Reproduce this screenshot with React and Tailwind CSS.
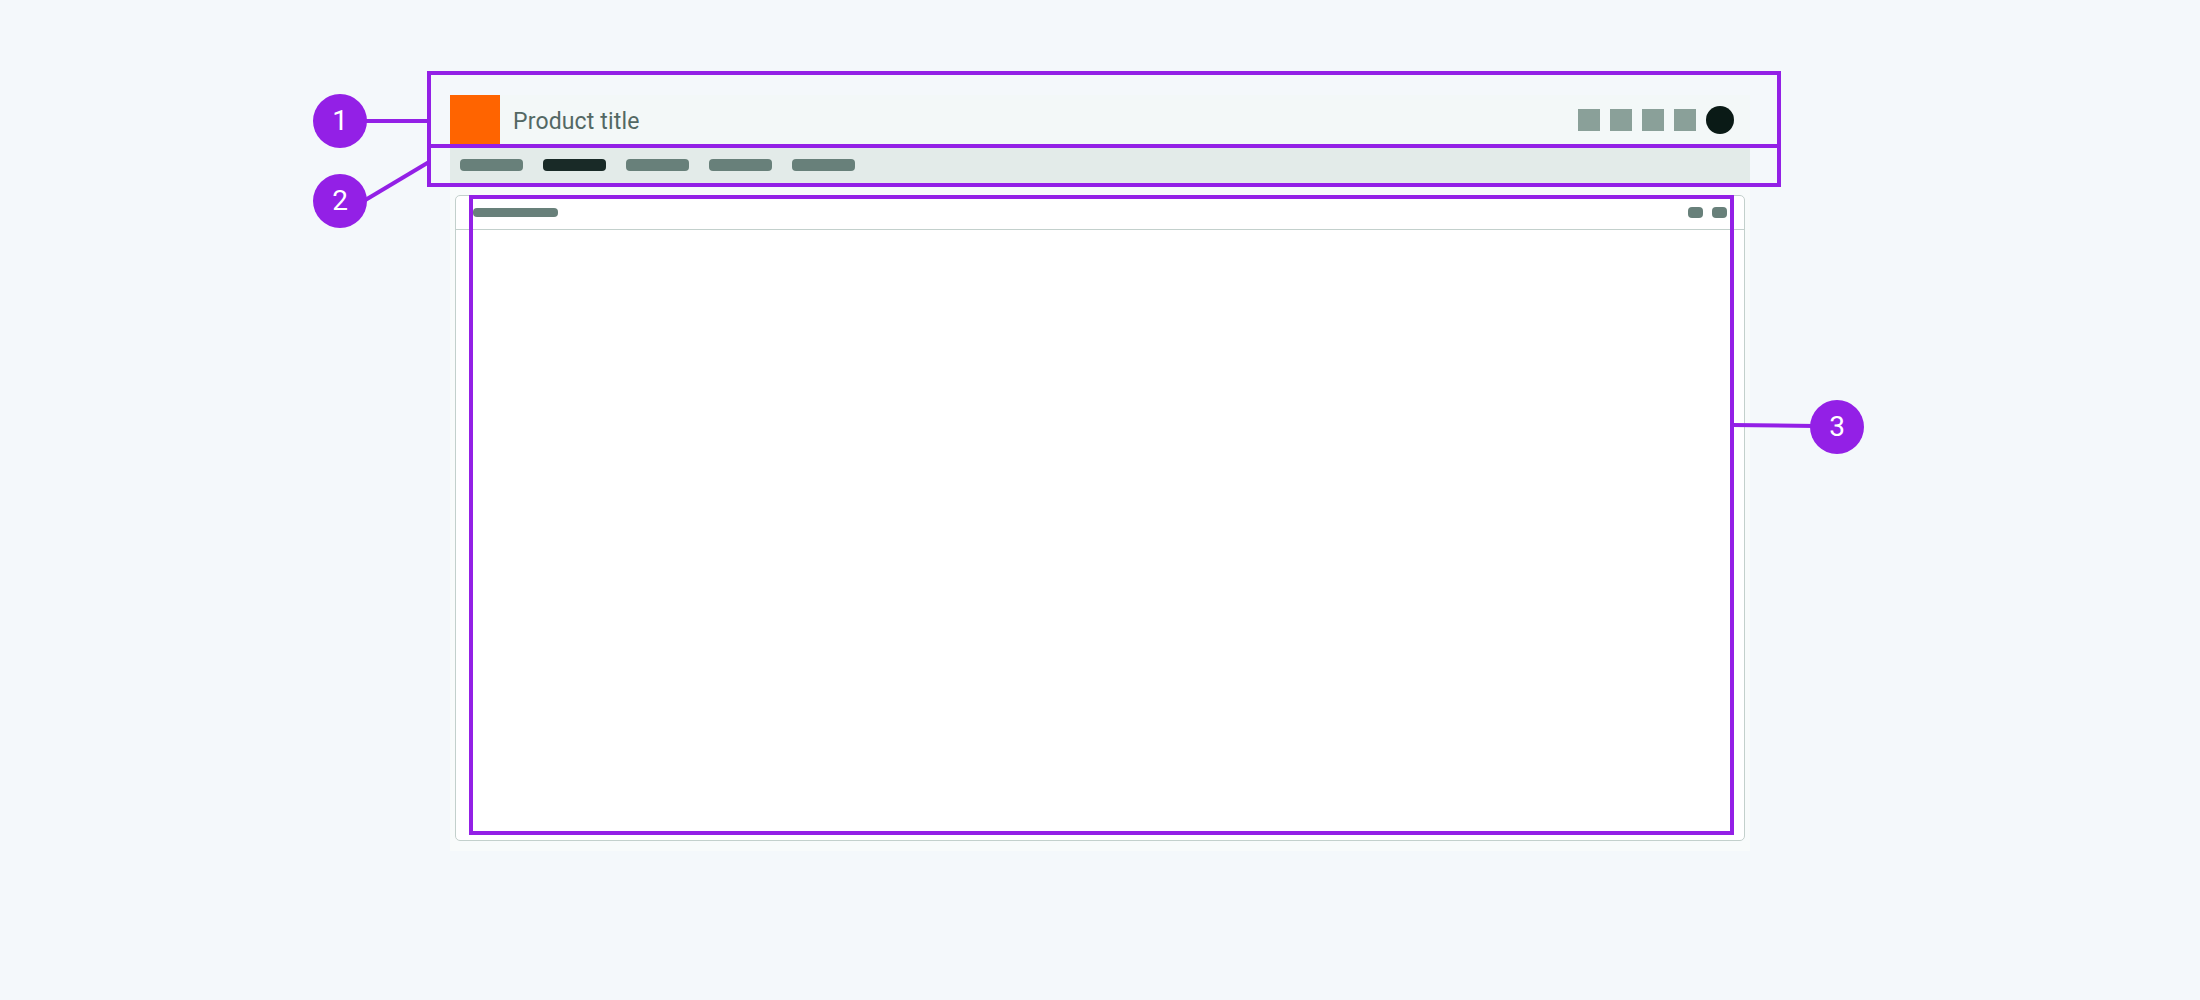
const font = { plex: "font-['Roboto','Liberation_Sans',sans-serif]" };

function Pill({ className }) {
  return <div className={"rounded-[4px] " + className} />;
}

function Marker({ n, className }) {
  return (
    <div
      className={
        "absolute flex h-[54px] w-[54px] items-center justify-center rounded-full bg-[#9320e6] text-[28px] font-normal text-white " +
        className
      }
    >
      {n}
    </div>
  );
}

function Shell() {
  return (
    <div className="mt-[95px] w-[1300px]">
      <header className="flex h-[50px] items-center bg-[#f3f8f8]">
        <div className="h-[50px] w-[50px] bg-[#ff6400]" />
        <h1 className={"ml-[13px] pt-[4px] text-[23px] font-normal tracking-[0.15px] text-[#536864] " + font.plex}>Product title</h1>
        <div className="ml-auto mr-4 flex items-center gap-[10px]">
          <div className="h-[22px] w-[22px] bg-[#8aa099]" />
          <div className="h-[22px] w-[22px] bg-[#8aa099]" />
          <div className="h-[22px] w-[22px] bg-[#8aa099]" />
          <div className="h-[22px] w-[22px] bg-[#8aa099]" />
          <div className="h-7 w-7 rounded-full bg-[#0a1a16]" />
        </div>
      </header>
      <nav className="flex h-[40px] items-center gap-5 bg-[#e3ebe9] pl-[10px]">
        <Pill className="h-3 w-[63px] bg-[#68807a]" />
        <Pill className="h-3 w-[63px] bg-[#192a27]" />
        <Pill className="h-3 w-[63px] bg-[#68807a]" />
        <Pill className="h-3 w-[63px] bg-[#68807a]" />
        <Pill className="h-3 w-[63px] bg-[#68807a]" />
      </nav>
      <main className="bg-[#f8fbfb] px-[5px] pb-[10px] pt-[10px]">
        <section className="h-[646px] rounded-[5px] border border-[#c3d0cc] bg-white">
          <div className="flex h-[34px] items-center justify-between border-b border-[#c3d0cc] pl-[17px] pr-[17px]">
            <Pill className="h-[9px] w-[85px] bg-[#68807a]" />
            <div className="flex gap-[9px]">
              <Pill className="h-[11px] w-[15px] bg-[#68807a]" />
              <Pill className="h-[11px] w-[15px] bg-[#68807a]" />
            </div>
          </div>
        </section>
      </main>
    </div>
  );
}

export default function App() {
  return (
    <div className="relative flex h-[1000px] justify-center overflow-hidden bg-[#f4f8fb]">
      <Shell />
      {/* annotation overlay */}
      <div className="absolute left-[427px] top-[71px] h-[77px] w-[1354px] border-4 border-[#9320e6]" />
      <div className="absolute left-[427px] top-[144px] h-[43px] w-[1354px] border-4 border-[#9320e6]" />
      <div className="absolute left-[469px] top-[195px] h-[640px] w-[1265px] border-4 border-[#9320e6]" />
      <svg className="absolute left-0 top-0" width="2200" height="1000" fill="none" stroke="#9320e6" strokeWidth="4">
        <path d="M360 121H428" />
        <path d="M362 202L429 162" />
        <path d="M1732 425L1815 426" />
      </svg>
      <Marker n="1" className={"left-[313px] top-[94px] " + font.plex} />
      <Marker n="2" className={"left-[313px] top-[174px] " + font.plex} />
      <Marker n="3" className={"left-[1810px] top-[400px] " + font.plex} />
    </div>
  );
}
